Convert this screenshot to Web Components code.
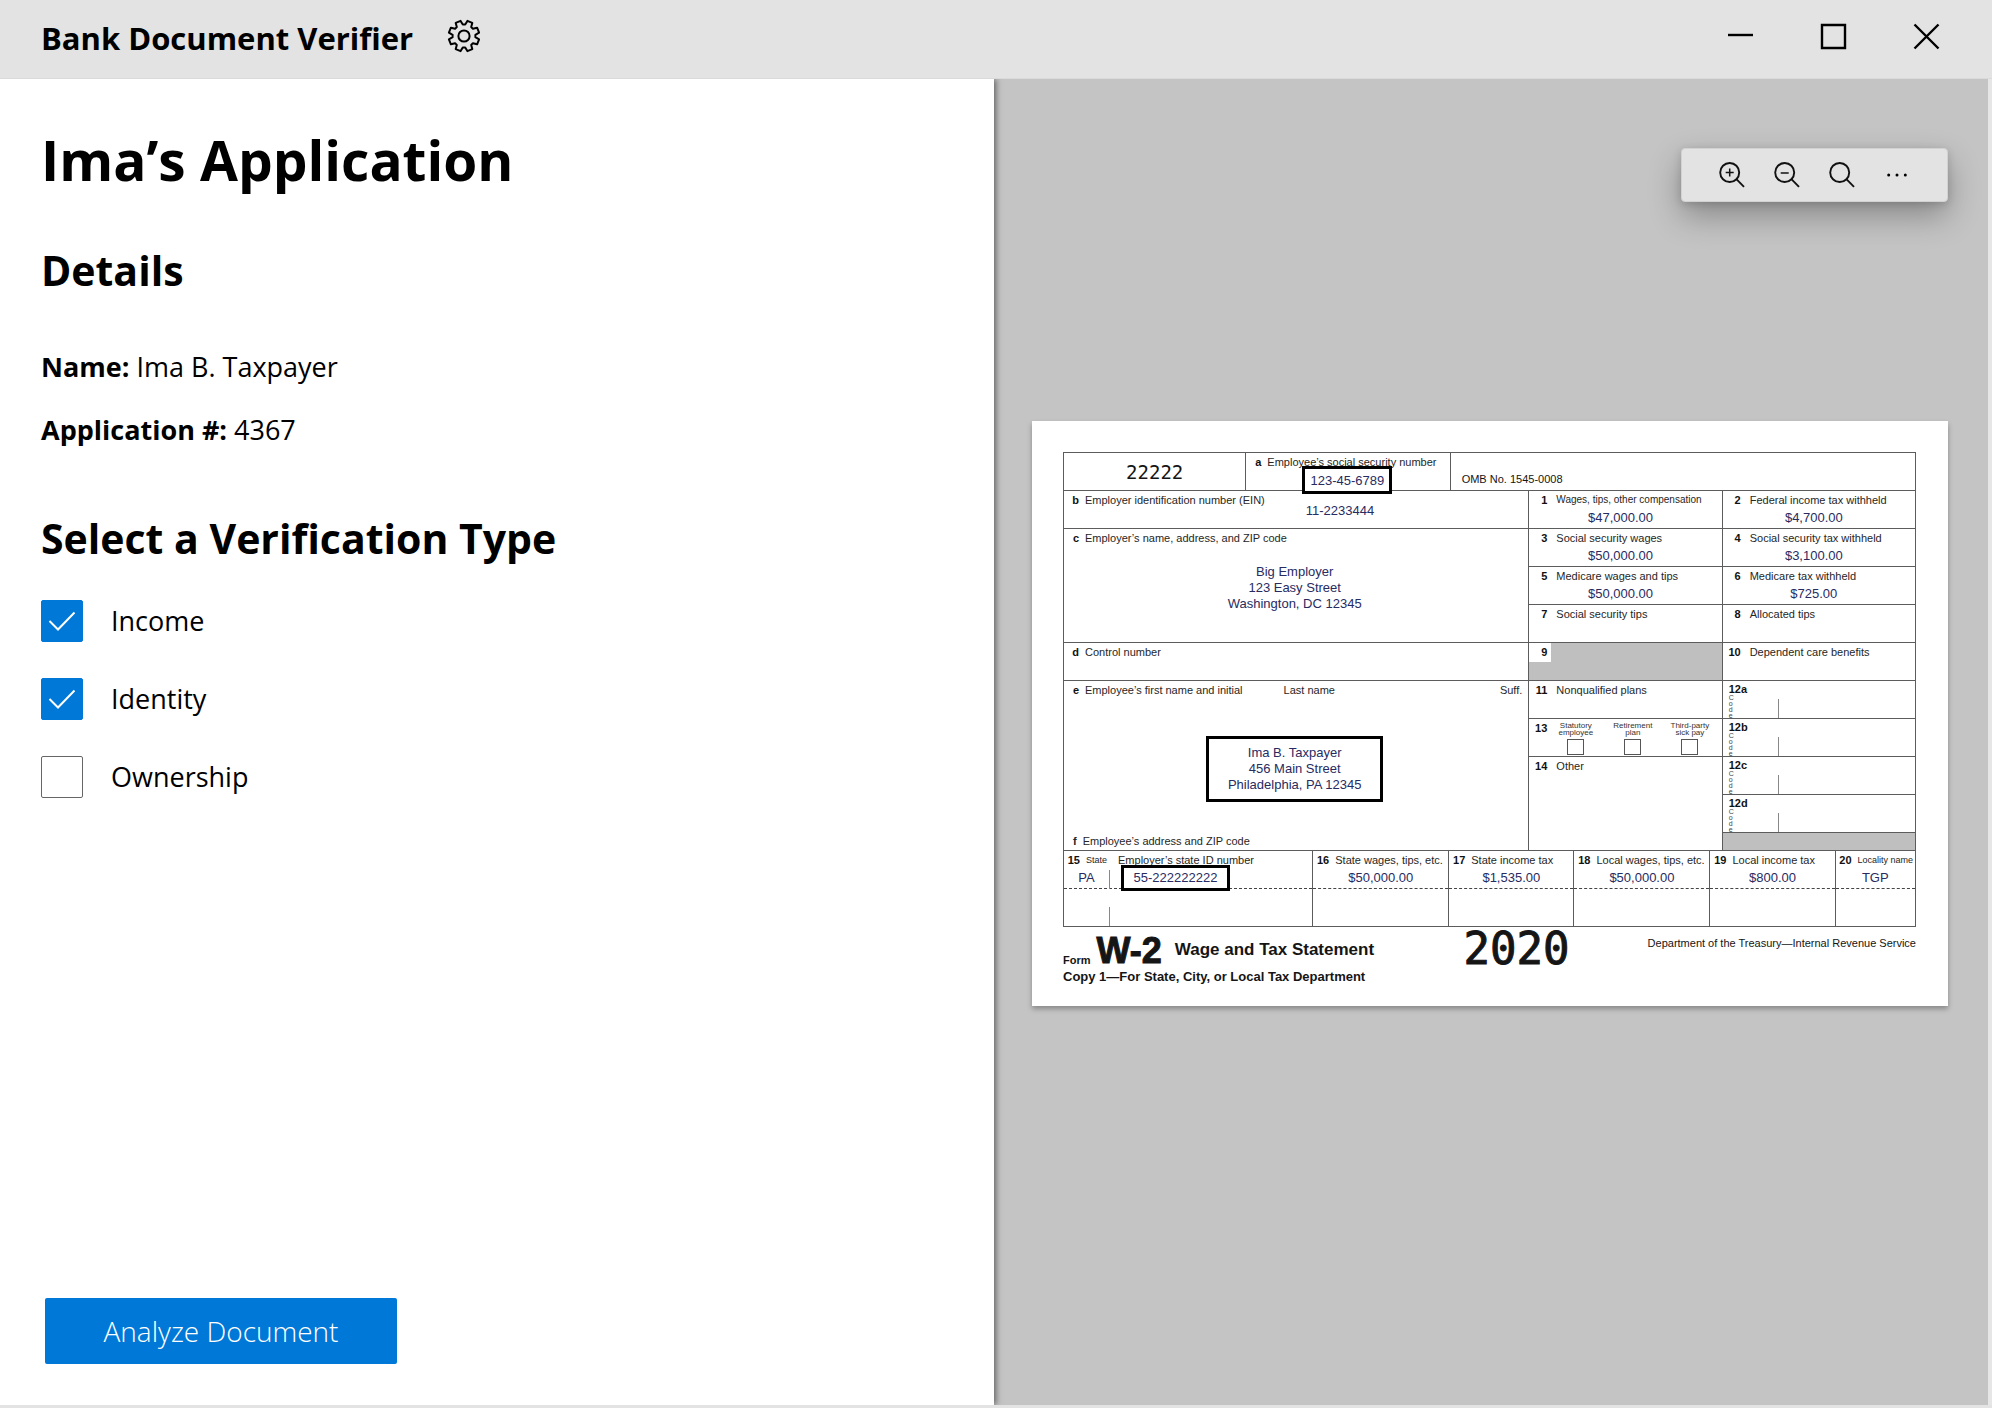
<!DOCTYPE html>
<html lang="en">
<head>
<meta charset="utf-8">
<title>Bank Document Verifier</title>
<style>
  body { margin: 0; background: #e3e3e3; font-family: "Open Sans", "Noto Sans", sans-serif; color: #000; }
</style>
</head>
<body>
<verifier-app></verifier-app>

<template id="verifier-app">
  <style>
    :host { display: grid; grid-template-rows: auto 1fr; min-height: 100vh; box-sizing: border-box; border-bottom: 3px solid #e3e3e3; }
    main { display: grid; grid-template-columns: 1fr 1fr; border-right: 4px solid #e6e6e6; }
  </style>
  <title-bar>Bank Document Verifier</title-bar>
  <main>
    <application-panel></application-panel>
    <document-viewer><w2-form></w2-form></document-viewer>
  </main>
</template>

<template id="title-bar">
  <style>
    :host { display: flex; align-items: center; justify-content: space-between; height: 79px; box-sizing: border-box; padding: 0 43px 6px 41px; background: #e3e3e3; border-bottom: 1px solid #dadada; }
    div { display: flex; align-items: center; }
    .name { gap: 34px; }
    .controls { gap: 48px; }
    .title { padding-top: 3px; font-size: 31px; line-height: 44px; font-weight: 700; }
    button { display: block; border: 0; padding: 0; background: none; color: inherit; }
    svg { display: block; fill: none; stroke: currentColor; }
  </style>
  <div class="name">
    <span class="title"><slot></slot></span>
    <button type="button" aria-label="Settings">
      <svg width="34" height="34" viewBox="-17 -17 34 34" stroke-width="2" stroke-linejoin="round">
        <path d="M1.2-11.4 3.4-15.1 8.3-13.1 7.2-8.9 8.9-7.2 13.1-8.3 15.1-3.4 11.4-1.2V1.2L15.1 3.4 13.1 8.3 8.9 7.2 7.2 8.9 8.3 13.1 3.4 15.1 1.2 11.4H-1.2L-3.4 15.1-8.3 13.1-7.2 8.9-8.9 7.2-13.1 8.3-15.1 3.4-11.4 1.2V-1.2L-15.1-3.4-13.1-8.3-8.9-7.2-7.2-8.9-8.3-13.1-3.4-15.1-1.2-11.4Z"/>
        <circle r="5.6"/>
      </svg>
    </button>
  </div>
  <div class="controls">
    <button type="button" aria-label="Minimize"><svg width="45" height="45" viewBox="0 0 45 45" stroke-width="2.4"><path d="M10 21H35"/></svg></button>
    <button type="button" aria-label="Maximize"><svg width="45" height="45" viewBox="0 0 45 45" stroke-width="2.4"><path d="M11 11H34V34H11Z"/></svg></button>
    <button type="button" aria-label="Close"><svg width="45" height="45" viewBox="0 0 45 45" stroke-width="2.4"><path d="M10.500 10.500 34.500 34.500M34.500 10.500 10.500 34.500"/></svg></button>
  </div>
</template>

<template id="application-panel">
  <style>
    :host { display: flex; flex-direction: column; box-sizing: border-box; padding: 45px 41px 41px; background: #fff; position: relative; z-index: 1; box-shadow: 2px 0 6px rgba(0,0,0,.5); clip-path: inset(0 -12px 0 0); }
    h1, h2, p { margin: 0; }
    h1 { font-size: 55px; line-height: 72px; font-weight: 700; }
    h2 { font-size: 41px; line-height: 56px; font-weight: 700; }
    p { font-size: 27px; line-height: 40px; font-weight: 400; }
    b { font-weight: 700; }
    .details { display: flex; flex-direction: column; gap: 23px; margin: 49px 0 60px; }
    h1 + h2 { margin-top: 46px; }
    .options { display: flex; flex-direction: column; align-items: flex-start; gap: 36px; margin-top: 34px; }
    button { margin: auto 0 0 4px; align-self: flex-start; width: 352px; height: 66px; padding: 0; border: 0; border-radius: 2px; background: #0078d7; color: #fff; font: 350 28px/40px "Open Sans", "Noto Sans", sans-serif; }
  </style>
  <h1>Ima’s Application</h1>
  <h2>Details</h2>
  <div class="details">
    <p><b>Name:</b> Ima B. Taxpayer</p>
    <p><b>Application #:</b> 4367</p>
  </div>
  <h2>Select a Verification Type</h2>
  <div class="options">
    <check-option checked>Income</check-option>
    <check-option checked>Identity</check-option>
    <check-option>Ownership</check-option>
  </div>
  <button type="button">Analyze Document</button>
</template>

<template id="check-option">
  <style>
    :host { display: block; font-size: 27px; font-weight: 370; line-height: 42px; }
    label { display: flex; align-items: center; gap: 28px; }
    .box { display: grid; width: 42px; height: 42px; }
    .box > * { grid-area: 1 / 1; }
    input { appearance: none; margin: 0; box-sizing: border-box; border: 1px solid #666; border-radius: 2px; background: #fff; }
    input:checked { border-color: #0078d7; background: #0078d7; }
    svg { fill: none; stroke: #fff; stroke-width: 2; pointer-events: none; visibility: hidden; }
    input:checked + svg { visibility: visible; }
  </style>
  <label><span class="box"><input type="checkbox"><svg viewBox="0 0 42 42"><path d="M8.500 21 17 29.500 33.500 12.500"/></svg></span><slot></slot></label>
</template>

<template id="document-viewer">
  <style>
    :host { display: flex; flex-direction: column; box-sizing: border-box; padding: 69px 40px 40px 38px; background: #c4c4c4; gap: 219px; }
    zoom-toolbar { align-self: flex-end; }
  </style>
  <zoom-toolbar></zoom-toolbar>
  <slot></slot>
</template>

<template id="zoom-toolbar">
  <style>
    :host { display: flex; align-items: center; gap: 27px; height: 54px; box-sizing: border-box; padding: 0 36px; background: #e3e3e3; border: 1px solid #d2d2d2; border-radius: 4px; box-shadow: 0 14px 32px rgba(0,0,0,.3), 0 2px 8px rgba(0,0,0,.15); }
    button { display: block; border: 0; padding: 0; background: none; }
    svg { display: block; width: 28px; height: 28px; fill: none; stroke: #111; stroke-width: 1.9; }
    .sign { stroke-width: 1.5; }
    .dots { fill: #000; stroke: none; }
  </style>
  <button type="button" aria-label="Zoom in"><svg viewBox="0 0 28 28"><circle cx="11.700" cy="11.500" r="9.500"/><path d="M18.400 18.200 26 25.800"/><path class="sign" d="M7.700 11.500H15.700M11.700 7.500V15.500"/></svg></button>
  <button type="button" aria-label="Zoom out"><svg viewBox="0 0 28 28"><circle cx="11.700" cy="11.500" r="9.500"/><path d="M18.400 18.200 26 25.800"/><path class="sign" d="M7.700 12H15.700"/></svg></button>
  <button type="button" aria-label="Search"><svg viewBox="0 0 28 28"><circle cx="11.700" cy="11.500" r="9.500"/><path d="M18.400 18.200 26 25.800"/></svg></button>
  <button type="button" aria-label="More"><svg class="dots" viewBox="0 0 28 28"><circle cx="5.700" cy="14" r="1.500"/><circle cx="14" cy="14" r="1.500"/><circle cx="22.300" cy="14" r="1.500"/></svg></button>
</template>

<template id="w2-box">
  <style>
    :host { display: flex; flex-direction: column; position: relative; min-width: 0; box-sizing: border-box; padding-top: 3px; background: #fff; color: #262626; font: 11px/12px "Liberation Sans", sans-serif; white-space: nowrap; }
    header { display: flex; align-items: flex-start; gap: var(--num-gap, 9px); }
    b { flex: none; width: var(--num-width, 18px); text-align: right; color: #111; }
    .value { margin: 4px var(--value-pad, 10px) 0 0; text-align: center; font-size: 13px; line-height: 16px; color: #272b62; }
    .value:empty { display: none; }
    :host([size="small"]) .label { font-size: 9px; }
    :host([size="medium"]) .label { font-size: 10px; }
    :host([shaded]) { background: #bfbfbf; }
    :host([shaded]) header { margin-top: -3px; padding-top: 3px; width: 22px; height: 16px; background: #fff; }
  </style>
  <header><b></b><span class="label"></span><slot name="aside"></slot></header>
  <div class="value"></div>
  <slot></slot>
</template>

<template id="code-box">
  <style>
    :host { display: flex; min-width: 0; background: #fff; color: #111; font: bold 11px/11px "Liberation Sans", sans-serif; justify-content: flex-start; }
    .name { display: flex; flex-direction: column; width: 49px; padding: 3px 0 0 6px; }
    .code { display: flex; flex-direction: column; font: 7px/6px "Liberation Sans", sans-serif; height: 23px; color: #444; }
    .rule { align-self: flex-end; width: 1px; height: 19px; background: #888; }
  </style>
  <div class="name"><slot></slot><span class="code"><span>C</span><span>o</span><span>d</span><span>e</span></span></div>
  <div class="rule"></div>
</template>

<template id="tick-item">
  <style>
    :host { display: block; width: 57px; font: 8px/7px "Liberation Sans", sans-serif; color: #333; }
    label { display: flex; flex-direction: column; align-items: center; text-align: center; gap: 3px; white-space: pre-line; }
    input { appearance: none; margin: 0; width: 17px; height: 16px; box-sizing: border-box; border: 1px solid #555; background: #fff; }
  </style>
  <label><span><slot></slot></span><input type="checkbox"></label>
</template>

<template id="w2-form">
  <style>
    :host { display: block; box-sizing: border-box; padding: 31px 32px 18px 31px; background: #fff; font-family: "Liberation Sans", sans-serif; color: #151515; box-shadow: 0 3px 5px rgba(0,0,0,.3); }
    .sheet { display: flex; flex-direction: column; gap: 1px; padding: 1px; background: #5c5c5c; }
    .grid { display: grid; gap: 1px; }
    .top { grid-template-columns: minmax(0,182fr) minmax(0,204fr) minmax(0,466fr); grid-template-rows: 37px; }
    .body { grid-template-columns: minmax(0,466fr) minmax(0,193fr) minmax(0,193fr); grid-template-rows: repeat(9, 37px) 17px; }
    .state { grid-template-columns: minmax(0,250fr) minmax(0,136fr) minmax(0,125fr) minmax(0,136fr) minmax(0,125fr) minmax(0,80fr); grid-template-rows: 38px 37px; row-gap: 0; --num-width: 16px; --num-gap: 6px; --value-pad: 0px; }
    .left { --num-width: 15px; --num-gap: 6px; grid-column: 1; }
    .mid { grid-column: 2; }
    .right { grid-column: 3; }
    .three { grid-row: span 3; }
    .ssn { z-index: 1; }
    .cell { background: #fff; font-size: 11px; line-height: 12px; }
    .control { display: flex; align-items: center; justify-content: center; font: 19px/36px "DejaVu Sans Mono", monospace; }
    .omb { padding: 20px 11px 0; }
    .entry { color: #272b62; font-size: 13px; line-height: 16px; text-align: center; }
    .ein { padding: 9px 0 0 35px; }
    .address { margin: 20px 3px 0 0; }
    .mark { box-sizing: border-box; border: 3px solid #000; background: #fff; }
    .ssn .mark { position: absolute; left: 56px; bottom: -4px; width: 90px; height: 28px; line-height: 24px; }
    .state-id .mark { position: absolute; left: 57px; bottom: -3px; width: 109px; height: 26px; line-height: 20px; }
    .person .mark { align-self: center; width: 177px; margin: 40px 3px 0 0; padding: 6px 0; }
    .last { padding-left: 35px; }
    .suffix { margin-left: auto; padding-right: 6px; }
    .foot { margin: auto 0 0 9px; padding-bottom: 3px; display: flex; gap: 6px; }
    .state > * { border-bottom: 1px dashed #444; }
    .state > .blank { background: #fff; border-bottom: 0; }
    .small { font-size: 9px; padding-right: 5px; }
    .pa { display: flex; margin-top: 4px; }
    .pa span { width: 45px; }
    .pa i, .blank i { display: block; width: 1px; height: 19px; background: #888; }
    .blank i { margin: 18px 0 0 45px; }
    .ticked { --num-gap: 0px; }
    .ticks { display: flex; }
    .grey { background: #bfbfbf; }
    .caption { display: grid; grid-template-columns: 400fr 452fr; padding-top: 1px; }
    .caption > div { display: flex; align-items: flex-end; height: 38px; }
    .form { font: bold 11px/12px "Liberation Sans", sans-serif; }
    .w2 { font: bold 36px/30px "Liberation Sans", sans-serif; padding: 0 13px 0 6px; -webkit-text-stroke: 1px #151515; }
    .wage { font: bold 17px/32px "Liberation Sans", sans-serif; }
    .year { font: 44px/34px "DejaVu Sans Mono", monospace; -webkit-text-stroke: 1px #151515; }
    .irs { font-size: 11px; line-height: 30px; align-self: flex-start; margin-left: auto; }
    .copy { margin: 0; font: bold 13px/22px "Liberation Sans", sans-serif; }
  </style>
  <div class="sheet">
    <div class="grid top left">
      <div class="cell control">22222</div>
      <w2-box class="ssn" num="a" label="Employee’s social security number"><div class="entry mark">123-45-6789</div></w2-box>
      <div class="cell omb">OMB No. 1545-0008</div>
    </div>
    <div class="grid body">
      <w2-box class="left" num="b" label="Employer identification number (EIN)"><span slot="aside" class="entry ein">11-2233444</span></w2-box>
      <w2-box class="mid" num="1" label="Wages, tips, other compensation" value="$47,000.00" size="medium"></w2-box>
      <w2-box class="right" num="2" label="Federal income tax withheld" value="$4,700.00"></w2-box>

      <w2-box class="left three" num="c" label="Employer’s name, address, and ZIP code"><div class="entry address">Big Employer<br>123 Easy Street<br>Washington, DC 12345</div></w2-box>
      <w2-box class="mid" num="3" label="Social security wages" value="$50,000.00"></w2-box>
      <w2-box class="right" num="4" label="Social security tax withheld" value="$3,100.00"></w2-box>
      <w2-box class="mid" num="5" label="Medicare wages and tips" value="$50,000.00"></w2-box>
      <w2-box class="right" num="6" label="Medicare tax withheld" value="$725.00"></w2-box>
      <w2-box class="mid" num="7" label="Social security tips"></w2-box>
      <w2-box class="right" num="8" label="Allocated tips"></w2-box>

      <w2-box class="left" num="d" label="Control number"></w2-box>
      <w2-box class="mid" num="9" label="" shaded></w2-box>
      <w2-box class="right" num="10" label="Dependent care benefits"></w2-box>

      <w2-box class="left person" style="grid-row: 6 / 11" num="e" label="Employee’s first name and initial">
        <span slot="aside" class="last">Last name</span><span slot="aside" class="suffix">Suff.</span>
        <div class="entry mark">Ima B. Taxpayer<br>456 Main Street<br>Philadelphia, PA 12345</div>
        <div class="foot"><b>f</b><span>Employee’s address and ZIP code</span></div>
      </w2-box>
      <w2-box class="mid" num="11" label="Nonqualified plans"></w2-box>
      <code-box class="right">12a</code-box>
      <w2-box class="mid ticked" num="13" label="">
        <div slot="aside" class="ticks"><tick-item>Statutory
employee</tick-item><tick-item>Retirement
plan</tick-item><tick-item>Third-party
sick pay</tick-item></div>
      </w2-box>
      <code-box class="right">12b</code-box>
      <w2-box class="mid" style="grid-row: 8 / 11" num="14" label="Other"></w2-box>
      <code-box class="right">12c</code-box>
      <code-box class="right">12d</code-box>
      <div class="right grey"></div>
    </div>
    <div class="grid state">
      <w2-box class="state-id" num="15" label="">
        <span slot="aside" class="small">State</span><span slot="aside">Employer’s state ID number</span>
        <div class="pa"><span class="entry">PA</span><i></i></div>
        <div class="entry mark">55-222222222</div>
      </w2-box>
      <w2-box num="16" label="State wages, tips, etc." value="$50,000.00"></w2-box>
      <w2-box num="17" label="State income tax" value="$1,535.00"></w2-box>
      <w2-box num="18" label="Local wages, tips, etc." value="$50,000.00"></w2-box>
      <w2-box num="19" label="Local income tax" value="$800.00"></w2-box>
      <w2-box num="20" label="Locality name" value="TGP" size="small"></w2-box>
      <div class="blank"><i></i></div><div class="blank"></div><div class="blank"></div><div class="blank"></div><div class="blank"></div><div class="blank"></div>
    </div>
  </div>
  <div class="caption">
    <div><span class="form">Form</span><span class="w2">W-2</span><span class="wage">Wage and Tax Statement</span></div>
    <div><span class="year">2020</span><span class="irs">Department of the Treasury—Internal Revenue Service</span></div>
  </div>
  <p class="copy">Copy 1—For State, City, or Local Tax Department</p>
</template>

<script>
  class TemplateElement extends HTMLElement {
    constructor() {
      super();
      const root = this.attachShadow({ mode: "open" });
      root.append(document.getElementById(this.localName).content.cloneNode(true));
    }
  }

  class CheckOption extends TemplateElement {
    connectedCallback() {
      this.shadowRoot.querySelector("input").checked = this.hasAttribute("checked");
    }
  }

  class W2Box extends TemplateElement {
    connectedCallback() {
      const root = this.shadowRoot;
      root.querySelector("b").textContent = this.getAttribute("num");
      const label = root.querySelector(".label");
      label.textContent = this.getAttribute("label");
      if (!label.textContent) label.remove();
      root.querySelector(".value").textContent = this.getAttribute("value") || "";
    }
  }

  customElements.define("w2-box", W2Box);
  customElements.define("check-option", CheckOption);
  for (const name of ["code-box", "tick-item", "w2-form", "zoom-toolbar", "document-viewer", "application-panel", "title-bar", "verifier-app"]) {
    customElements.define(name, class extends TemplateElement {});
  }
</script>
</body>
</html>
